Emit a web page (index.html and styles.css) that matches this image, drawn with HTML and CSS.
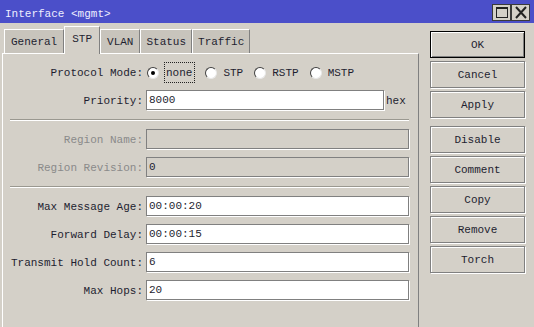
FILE: index.html
```html
<!DOCTYPE html>
<html>
  <head>
    <title>Interface &lt;mgmt&gt;</title>
    <meta charset='UTF-8'>
    <link rel="stylesheet" href="styles.css">
  </head>
  <body>
    <div class='window'>
      <div class='titlebar'>
        <span class='title'>Interface &lt;mgmt&gt;</span>
        <div class='winButtons'>
          <span class='winButton'>
            <svg width='14' height='13' viewBox='0 0 14 13'>
              <rect x='1.5' y='1.5' width='11' height='10' fill='none' stroke='#222' stroke-width='1'/>
              <line x1='1' y1='2' x2='13' y2='2' stroke='#222' stroke-width='2'/>
            </svg>
          </span>
          <span class='winButton'>
            <svg width='14' height='13' viewBox='0 0 14 13'>
              <path d='M2 1 L12 12 M12 1 L2 12' stroke='#222' stroke-width='2' fill='none'/>
            </svg>
          </span>
        </div>
      </div>

      <div class='main'>
        <div class='left'>
          <div class='tabs'>
            <div class='tab'>General</div>
            <div class='tab active'>STP</div>
            <div class='tab'>VLAN</div>
            <div class='tab narrow'>Status</div>
            <div class='tab narrow'>Traffic</div>
          </div>

          <div class='panel'>
            <div class='row'>
              <span class='fieldLabel'>Protocol Mode:</span>
              <div class='radios'>
                <span class='radioOption'><span class='radio checked'></span><span class='radioText focused'>none</span></span>
                <span class='radioOption'><span class='radio'></span><span class='radioText'>STP</span></span>
                <span class='radioOption'><span class='radio'></span><span class='radioText'>RSTP</span></span>
                <span class='radioOption'><span class='radio'></span><span class='radioText'>MSTP</span></span>
              </div>
            </div>
            <div class='row'>
              <span class='fieldLabel'>Priority:</span>
              <div class='field short'>8000</div>
              <span class='unit'>hex</span>
            </div>

            <div class='separator'></div>

            <div class='row'>
              <span class='fieldLabel disabled'>Region Name:</span>
              <div class='field disabled'></div>
            </div>
            <div class='row'>
              <span class='fieldLabel disabled'>Region Revision:</span>
              <div class='field disabled'>0</div>
            </div>

            <div class='separator'></div>

            <div class='row'>
              <span class='fieldLabel'>Max Message Age:</span>
              <div class='field'>00:00:20</div>
            </div>
            <div class='row'>
              <span class='fieldLabel'>Forward Delay:</span>
              <div class='field'>00:00:15</div>
            </div>
            <div class='row'>
              <span class='fieldLabel'>Transmit Hold Count:</span>
              <div class='field'>6</div>
            </div>
            <div class='row'>
              <span class='fieldLabel'>Max Hops:</span>
              <div class='field'>20</div>
            </div>
          </div>
        </div>

        <div class='actions'>
          <button class='actionButton default'>OK</button>
          <button class='actionButton'>Cancel</button>
          <button class='actionButton'>Apply</button>
          <button class='actionButton groupStart'>Disable</button>
          <button class='actionButton'>Comment</button>
          <button class='actionButton'>Copy</button>
          <button class='actionButton'>Remove</button>
          <button class='actionButton'>Torch</button>
        </div>
      </div>
    </div>
  </body>
</html>
```

FILE: styles.css
```css
* {
  box-sizing: border-box;
}

body {
  margin: 0;
  font-family: "Liberation Mono", "DejaVu Sans Mono", monospace;
  font-size: 11px;
  color: #1e1e30;
}

.window {
  width: 534px;
  height: 327px;
  background: #d4d0c8;
  overflow: hidden;
  display: flex;
  flex-direction: column;
}

/* title bar */
.titlebar {
  flex: none;
  height: 23px;
  background: #4b4fc9;
  color: #eeeeff;
  display: flex;
  align-items: center;
  justify-content: space-between;
  padding: 0 4px 0 5px;
}

.title {
  padding-top: 5px;
}

.winButtons {
  display: flex;
  margin-top: 2px;
}

.winButton {
  width: 19px;
  height: 17px;
  border: 1px solid #3a3a3a;
  background: #d4d0c8;
  display: flex;
  align-items: center;
  justify-content: center;
}

/* body */
.main {
  flex: 1;
  display: flex;
  min-height: 0;
}

.left {
  width: 417px;
  margin-left: 2px;
  display: flex;
  flex-direction: column;
}

.tabs {
  height: 30px;
  display: flex;
  align-items: flex-end;
  padding-left: 2px;
}

.tab {
  height: 24px;
  padding: 0 6px;
  background: #c8c4bc;
  border-top: 1px solid #fff;
  border-left: 1px solid #fff;
  border-right: 1px solid #808080;
  display: flex;
  align-items: center;
}

.tab.narrow {
  padding: 0 5px;
}

.tab.active {
  height: 28px;
  padding: 6px 7px 0;
  align-items: flex-start;
  background: #d4d0c8;
  margin-bottom: -1px;
  position: relative;
  z-index: 1;
}

.panel {
  flex: 1;
  border-top: 1px solid #fff;
  border-left: 1px solid #fff;
  border-right: 1px solid #808080;
  padding: 8px 9px 0 0;
  display: flex;
  flex-direction: column;
  gap: 7px;
}

.row {
  height: 21px;
  display: flex;
  align-items: center;
  gap: 3px;
}

.fieldLabel {
  flex: none;
  width: 140px;
  text-align: right;
}

.fieldLabel.disabled {
  color: #8a8a8a;
}

.field {
  width: 263px;
  height: 20px;
  margin-bottom: 1px;
  padding: 0 2px;
  background: #fff;
  border: 1px solid #808080;
  box-shadow: 1px 1px 0 #fff;
  display: flex;
  align-items: center;
}

.field.short {
  width: 238px;
}

.field.disabled {
  background: #d4d0c8;
}

.unit {
  margin-left: -1px;
}

.separator {
  height: 2px;
  margin: 1px 0 1px 7px;
  border-top: 1px solid #9a9890;
  border-bottom: 1px solid #fff;
}

/* radio buttons */
.radios {
  display: flex;
  align-items: center;
  margin-left: 1px;
}

.radioOption {
  display: flex;
  align-items: center;
  gap: 6px;
  margin-right: 11px;
}

.radio {
  width: 12px;
  height: 12px;
  border-radius: 50%;
  background: #fff;
  border: 1px solid;
  border-color: #404040 #e8e8e8 #e8e8e8 #404040;
  display: flex;
  align-items: center;
  justify-content: center;
}

.radio.checked::after {
  content: '';
  width: 4px;
  height: 4px;
  border-radius: 50%;
  background: #000;
}

.radioText.focused {
  height: 19px;
  padding: 0 2px 0 1px;
  outline: 1px dotted #222;
  display: flex;
  align-items: center;
}

/* side buttons */
.actions {
  width: 95px;
  margin-left: 11px;
  padding-top: 8px;
  display: flex;
  flex-direction: column;
  gap: 3px;
}

.actionButton {
  height: 27px;
  padding: 0;
  font: inherit;
  color: #1e1e30;
  background: #d4d0c8;
  border: 1px solid #808080;
  box-shadow: inset 1px 1px 0 #fff, 1px 1px 0 #fff;
}

.actionButton.default {
  border-color: #000;
  box-shadow: inset 1px 1px 0 #fff, inset -1px -1px 0 #808080;
}

.actionButton.groupStart {
  margin-top: 5px;
}
```
